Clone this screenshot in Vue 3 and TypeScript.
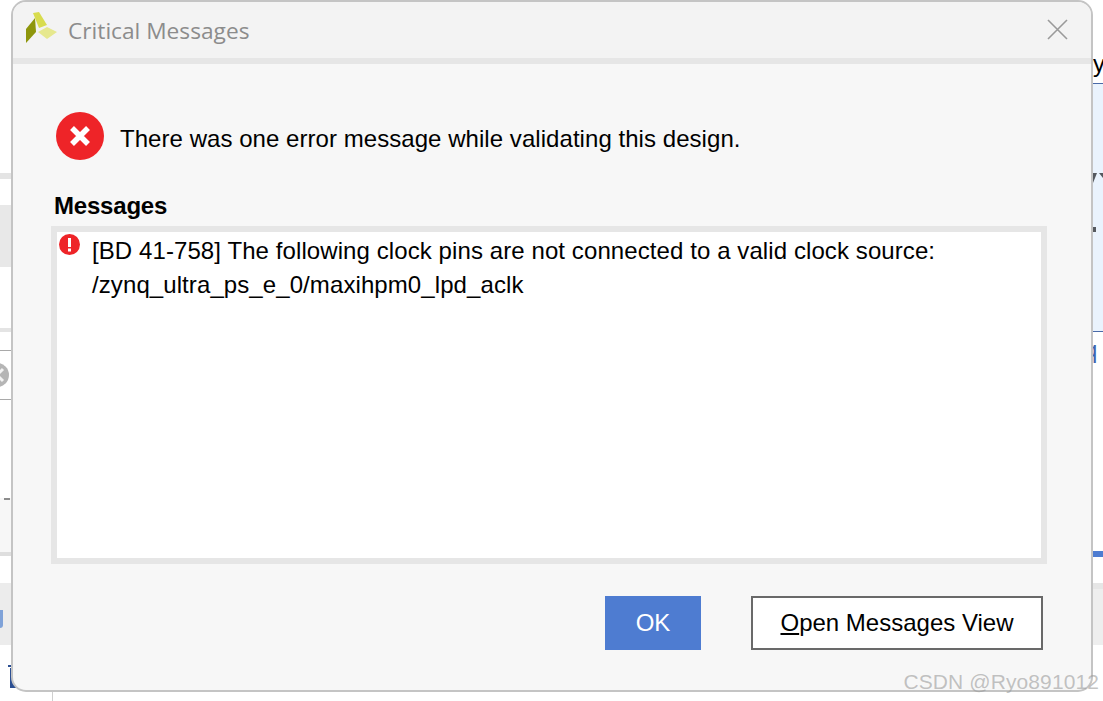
<template>
  <div class="page">
    <!-- bits of the main window showing left of the dialog -->
    <div class="side">
      <div class="l-gap h-173"></div>
      <div class="l-band h-6"></div>
      <div class="l-gap h-26"></div>
      <div class="l-block"></div>
      <div class="l-gap h-61"></div>
      <div class="l-band h-4"></div>
      <div class="l-gap h-18"></div>
      <div class="l-field">
        <svg class="clear-icon" width="24" height="24" viewBox="0 0 24 24">
          <circle cx="12" cy="12" r="12" fill="#b5b5b5" />
          <path d="M6 6l12 12M18 6L6 18" stroke="#f2f2f2" stroke-width="3" />
        </svg>
      </div>
      <div class="l-panel">
        <span class="dash"></span>
      </div>
      <div class="l-gap h-27"></div>
      <div class="l-tab">
        <span class="tab-glyph"></span>
      </div>
      <div class="l-last">
        <svg class="corner-glyph" width="12" height="24" viewBox="0 0 12 24">
          <path d="M0 0H5V2H0zM2 3H5V16L12 20V23H2z" fill="#2c4f92" />
        </svg>
      </div>
    </div>

    <div class="center">
      <div class="dialog">
        <header class="titlebar">
          <svg class="logo" width="34" height="38" viewBox="0 0 34 38">
            <path d="M7 2l6-1 8 13-8 3z" fill="#d8dc4e" />
            <path d="M0 18L9 7l1 14L0 32z" fill="#8e960c" />
            <path d="M12 21l9-5 10 5-10 7z" fill="#e6e88e" />
          </svg>
          <span class="title">Critical Messages</span>
          <svg class="close" width="21" height="21" viewBox="0 0 21 21">
            <path d="M1 1l19 19M20 1L1 20" stroke="#9a9a9a" stroke-width="1.6" fill="none" />
          </svg>
        </header>

        <div class="body">
          <div class="summary">
            <svg width="48" height="48" viewBox="0 0 48 48">
              <circle cx="24" cy="24" r="24" fill="#ee2428" />
              <path d="M16 16l16 16M32 16L16 32" stroke="#fff" stroke-width="5.5" />
            </svg>
            <span class="summary-text">There was one error message while validating this design.</span>
          </div>

          <div class="messages-label">Messages</div>
          <div class="messages">
            <svg class="msg-icon" width="21" height="21" viewBox="0 0 21 21">
              <circle cx="10.5" cy="10.5" r="10.5" fill="#ee2428" />
              <rect x="9" y="4" width="3" height="9" fill="#fff" />
              <rect x="9" y="14.5" width="3" height="3" fill="#fff" />
            </svg>
            <div class="msg-text">
              <div v-for="line in messageLines" :key="line">{{ line }}</div>
            </div>
          </div>

          <div class="actions">
            <button class="btn-ok">OK</button>
            <button class="btn-view"><u>O</u>pen Messages View</button>
          </div>
        </div>
      </div>
      <div class="stub"></div>
    </div>

    <!-- bits of the main window showing right of the dialog -->
    <div class="side">
      <div class="r-top"><span class="r-letter">y</span></div>
      <div class="r-panel">
        <svg class="r-marks" width="10" height="10" viewBox="0 0 10 10">
          <path d="M0 0H4L0 10zM6 0H10V5z" fill="#55595f" />
        </svg>
        <span class="r-square"></span>
      </div>
      <div class="r-mid"><span class="r-q">q</span></div>
      <div class="r-bar"></div>
      <div class="r-gap"></div>
      <div class="r-tab"></div>
    </div>

    <div class="watermark">CSDN @Ryo891012</div>
  </div>
</template>

<script setup lang="ts">
const messageLines: string[] = [
  '[BD 41-758] The following clock pins are not connected to a valid clock source:',
  '/zynq_ultra_ps_e_0/maxihpm0_lpd_aclk'
];
</script>

<style>
html, body {
  margin: 0;
  background: #fff;
  overflow: hidden;
}
</style>

<style scoped>
.page {
  position: relative;
  width: 1103px;
  height: 701px;
  display: grid;
  grid-template-columns: 11px 1082px 10px;
  overflow: hidden;
  font-family: "Liberation Sans", Arial, sans-serif;
  color: #000;
}

.side {
  display: flex;
  flex-direction: column;
  height: 701px;
}

.h-173 { height: 173px; }
.h-6 { height: 6px; }
.h-26 { height: 26px; }
.h-61 { height: 61px; }
.h-4 { height: 4px; }
.h-18 { height: 18px; }
.h-27 { height: 27px; }

.l-gap { background: #fff; flex: none; }
.l-band { background: #e4e4e4; flex: none; }
.l-block { background: #e8e8e8; flex: none; height: 62px; }
.l-field {
  flex: none;
  height: 50px;
  box-sizing: border-box;
  border-top: 1px solid #a9a9a9;
  border-bottom: 1px solid #a9a9a9;
  display: flex;
  align-items: center;
  overflow: hidden;
}
.clear-icon { flex: none; margin-left: -15px; }
.l-panel {
  flex: none;
  height: 156px;
  box-sizing: border-box;
  background: linear-gradient(#fff 98px, #f7f7f7 98px);
  border-bottom: 4px solid #dedede;
  padding-top: 98px;
  display: flex;
  justify-content: flex-end;
}
.dash { width: 6px; height: 2px; background: #8c8c8c; margin-right: 1px; }
.l-tab {
  flex: none;
  height: 62px;
  background: #ececec;
  padding-top: 27px;
  box-sizing: border-box;
}
.tab-glyph {
  display: block;
  width: 3px;
  height: 18px;
  background: #7fa2d8;
  border-radius: 0 0 3px 0;
}
.l-last { flex: 1; padding: 20px 0 0 8px; }
.corner-glyph { display: block; overflow: visible; }

.center {
  display: flex;
  flex-direction: column;
}

.dialog {
  position: relative;
  z-index: 1;
  flex: none;
  height: 692px;
  box-sizing: border-box;
  border: 2px solid #c4c4c4;
  border-radius: 15px;
  background: #f7f7f7;
  display: flex;
  flex-direction: column;
  overflow: hidden;
}

.stub {
  width: 1px;
  height: 9px;
  margin-left: 41px;
  background: #cfcfcf;
}

.titlebar {
  flex: none;
  height: 62px;
  box-sizing: border-box;
  background: #f3f3f3;
  border-bottom: 6px solid #e6e6e6;
  display: flex;
  align-items: center;
  padding: 0 23px 0 13px;
}
.logo { flex: none; }
.title {
  margin-left: 8px;
  font-family: "Open Sans", "Noto Sans", sans-serif;
  font-size: 22.7px;
  color: #8c8c8c;
}
.close { margin-left: auto; margin-bottom: 2px; }

.body {
  flex: 1;
  display: flex;
  flex-direction: column;
  padding: 48px 44px 40px 38px;
}

.summary {
  display: flex;
  align-items: center;
  gap: 16px;
  margin-left: 5px;
}
.summary-text {
  margin-top: 6px;
  font-size: 24px;
  letter-spacing: 0.05px;
}

.messages-label {
  margin: 32px 0 0 3px;
  font-size: 24px;
  font-weight: 700;
  line-height: 28px;
  letter-spacing: -0.2px;
}

.messages {
  flex: 1;
  margin-top: 6px;
  border: 6px solid #e6e6e6;
  background: #fff;
  display: flex;
  align-items: flex-start;
}
.msg-icon { flex: none; margin: 2px 0 0 2px; }
.msg-text {
  margin: 2px 0 0 12px;
  font-size: 24px;
  line-height: 34px;
  letter-spacing: 0.09px;
}

.actions {
  flex: none;
  display: flex;
  justify-content: flex-end;
  gap: 50px;
  margin-top: 32px;
  padding-right: 4px;
}
.btn-ok {
  width: 96px;
  height: 54px;
  border: none;
  background: #4e7cd1;
  color: #fff;
  font: 24px "Liberation Sans", Arial, sans-serif;
  padding: 0;
}
.btn-view {
  width: 292px;
  height: 54px;
  border: 2px solid #696969;
  background: #fff;
  color: #000;
  font: 24px "Liberation Sans", Arial, sans-serif;
  padding: 0;
}

.r-top {
  flex: none;
  height: 84px;
  background: #fff;
  border-bottom: 1px solid #4a6aa8;
  box-sizing: border-box;
  overflow: hidden;
}
.r-letter { display: block; font-size: 24px; margin-top: 50px; }
.r-panel {
  flex: none;
  height: 248px;
  background: #eaf3fd;
  border-bottom: 1px solid #4a6aa8;
  box-sizing: border-box;
  padding-top: 89px;
}
.r-marks { display: block; }
.r-square { display: block; width: 3px; height: 5px; background: #55595f; margin-top: 44px; }
.r-mid { flex: none; height: 219px; background: #fff; overflow: hidden; }
.r-q {
  display: block;
  margin: 4px 0 0 -9px;
  color: #3f64ad;
  font-size: 24px;
}
.r-bar { flex: none; height: 6px; background: #4e7cd1; }
.r-gap { flex: none; height: 26px; background: #fff; }
.r-tab {
  flex: none;
  height: 62px;
  box-sizing: border-box;
  background: #eeeeee;
  border-top: 6px solid #e6e6e6;
}

/* CSDN stamp sits over the dialog */
.watermark {
  position: absolute;
  z-index: 2;
  right: 4px;
  bottom: 7px;
  font-size: 21px;
  letter-spacing: 0.1px;
  color: rgba(155, 155, 155, 0.6);
}
</style>
